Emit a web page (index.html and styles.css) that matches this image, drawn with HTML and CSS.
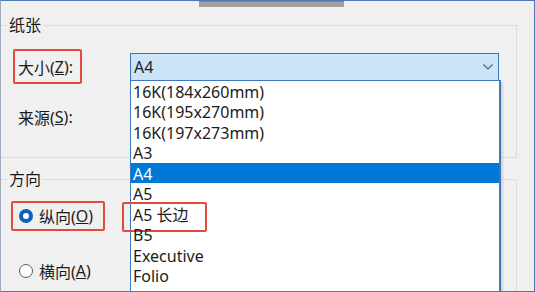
FILE: index.html
```html
<!DOCTYPE html>
<html lang="zh-CN">
<head>
  <meta charset="UTF-8">
  <title>页面设置</title>
  <link rel="stylesheet" href="styles.css">
</head>
<body>

  <div class="window">
    <div class="tab"></div>

    <fieldset class="group group-paper">
      <legend>纸张</legend>
      <div class="row">
        <span class="field-label mark">大小(<u>Z</u>):</span>
        <div class="combo">
          <span>A4</span>
          <svg width="10" height="6" viewBox="0 0 10 6"><polyline points="0.5,0.5 5,5 9.5,0.5" fill="none" stroke="#5f6368" stroke-width="1.2"/></svg>
        </div>
      </div>
      <div class="row row-second">
        <span class="field-label">来源(<u>S</u>):</span>
      </div>
    </fieldset>

    <fieldset class="group group-orient">
      <legend>方向</legend>
      <label class="radio-row mark"><span class="radio checked"></span>纵向(<u>O</u>)</label>
      <label class="radio-row radio-second"><span class="radio"></span>横向(<u>A</u>)</label>
    </fieldset>

    <ul class="dropdown">
      <li>16K(184x260mm)</li>
      <li>16K(195x270mm)</li>
      <li>16K(197x273mm)</li>
      <li>A3</li>
      <li class="selected">A4</li>
      <li>A5</li>
      <li>A5 长边<span class="mark-box"></span></li>
      <li>B5</li>
      <li>Executive</li>
      <li>Folio</li>
    </ul>
  </div>

</body>
</html>
```

FILE: styles.css
```css
* {
  box-sizing: border-box;
}

body {
  margin: 0;
  font-family: "Noto Sans", "Noto Sans CJK SC", sans-serif;
  font-size: 16px;
  color: #1b1b1b;
}

.window {
  position: relative;
  width: 535px;
  height: 292px;
  overflow: hidden;
  background-color: #f0f0f0;
  border: 1px solid #4f78b4;
  border-left-color: #9eabbd;
}

.tab {
  margin-left: 198px;
  width: 145px;
  height: 6px;
  background-color: #a29f9f;
  border-top: 1px solid #6f86ab;
}

.group {
  margin: 0;
  padding: 0;
  width: 516px;
  min-width: 0;
  border: 1px solid #dcdcdc;
  border-left: none;
}

.group legend {
  margin-left: 6px;
  padding: 0 2px;
  line-height: 18px;
}

.group-paper {
  margin-top: 9px;
  padding: 15px 0 23px 0;
}

.group-orient {
  margin-top: 12px;
  padding-top: 13px;
  height: 140px;
}

.row {
  display: flex;
  align-items: center;
}

.row-second {
  margin-top: 15px;
}

.field-label {
  display: flex;
  align-items: center;
  margin-left: 12px;
  width: 69px;
  height: 35px;
  padding-left: 3px;
  border: 2px solid transparent;
  white-space: nowrap;
}

.mark {
  border-color: #e24a3e;
  border-radius: 2px;
}

.combo {
  display: flex;
  align-items: center;
  justify-content: space-between;
  margin-left: 48px;
  width: 369px;
  height: 28px;
  padding: 1px 5px 0 3px;
  background-color: #cce4f7;
  border: 1px solid #3b74b8;
}

.radio-row {
  display: flex;
  align-items: center;
  margin-left: 10px;
  width: 94px;
  height: 30px;
  padding-left: 6px;
  border: 2px solid transparent;
  white-space: nowrap;
}

.radio-row.mark {
  border-color: #e24a3e;
}

.radio-second {
  margin-top: 25px;
}

.radio {
  width: 14px;
  height: 14px;
  margin-right: 6px;
  border-radius: 50%;
  border: 1px solid #5c5c5c;
  background-color: #fff;
  flex-shrink: 0;
}

.radio.checked {
  border: 4.5px solid #0f5fbd;
}

.dropdown {
  position: absolute;
  left: 129px;
  top: 79px;
  bottom: 0;
  width: 371px;
  margin: 0;
  padding: 0;
  list-style: none;
  background-color: #fff;
  border: 1px solid #3c78bd;
  border-right-width: 2px;
  border-bottom: none;
  box-shadow: 2px 2px 2px rgba(0,0,0,0.12);
}

.dropdown li {
  position: relative;
  height: 20.45px;
  line-height: 20.4px;
  padding: 1px 0 0 2px;
  white-space: nowrap;
}

.dropdown li.selected {
  background-color: #0078d7;
  color: #fff;
}

.mark-box {
  position: absolute;
  left: -9px;
  top: -2px;
  width: 85px;
  height: 30px;
  border: 2px solid #e24a3e;
  border-radius: 2px;
}
```
